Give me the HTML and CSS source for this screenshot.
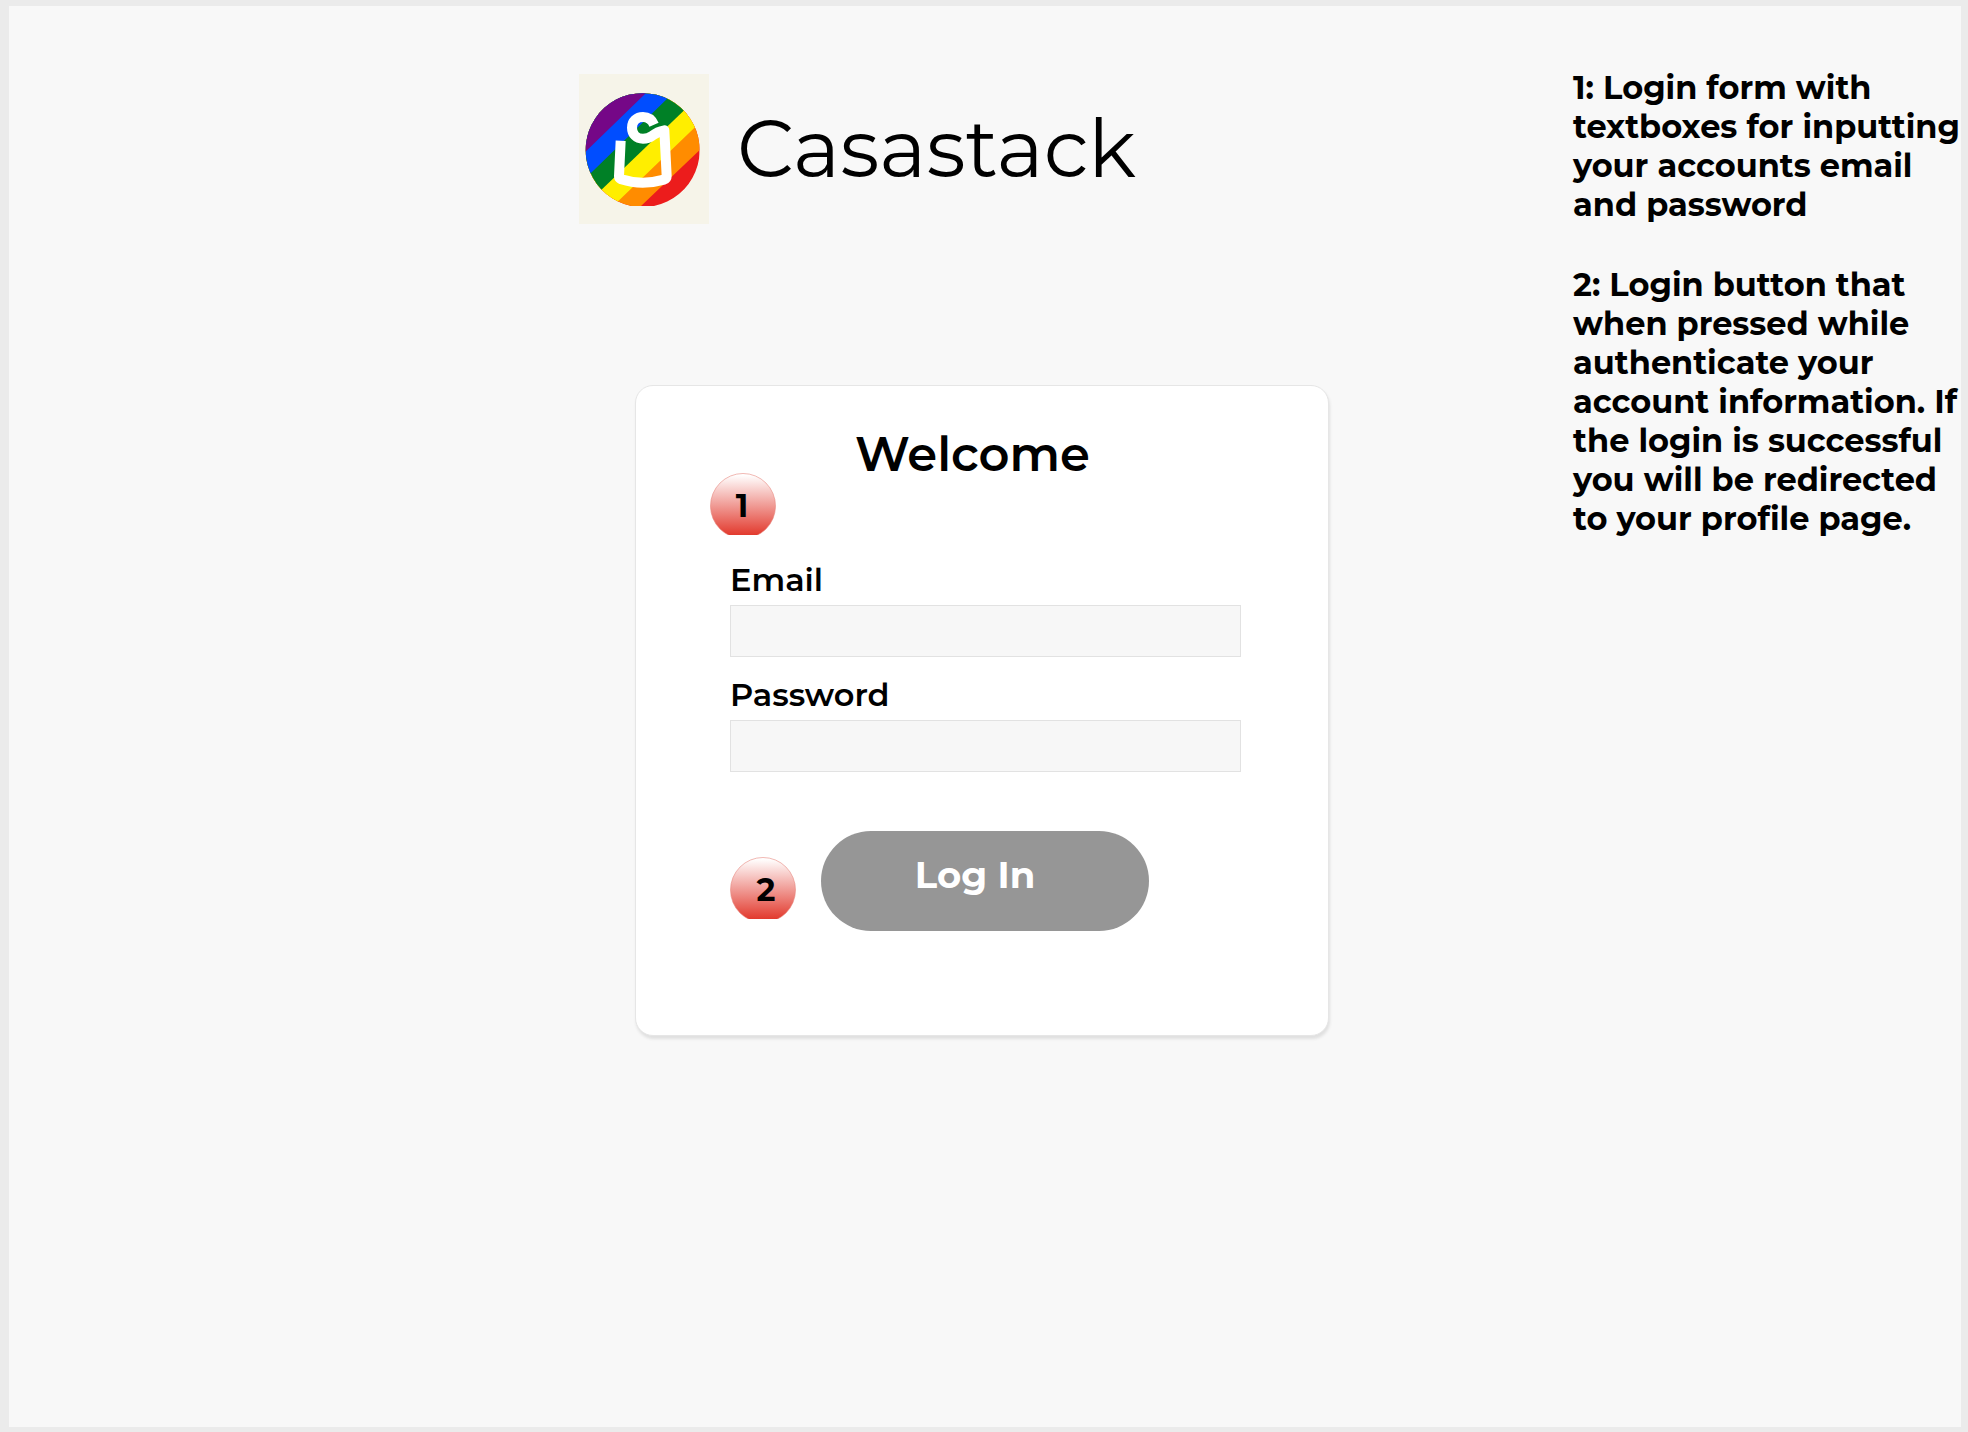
FILE: index.html
```html
<!DOCTYPE html>
<html lang="en">
<head>
<meta charset="utf-8">
<meta name="viewport" content="width=device-width, initial-scale=1">
<title>Casastack – Log In</title>
<link rel="stylesheet" href="styles.css">
</head>
<body>
<div class="frame">
  <main class="content">
    <header class="brand">
      <svg class="logo" viewBox="27 30 390 450" aria-hidden="true">
        <defs>
          <clipPath id="disc"><path d="M184 426A171 171 0 1 1 252 426Z"/></clipPath>
        </defs>
        <rect x="27" y="30" width="390" height="450" fill="#f6f4e9"/>
        <g clip-path="url(#disc)">
          <rect x="40" y="80" width="360" height="350" fill="#ec1c1c"/>
          <path d="M0 0H450V200L390 257 212 427 180 460H0Z" fill="#ff8c00"/>
          <path d="M0 0H450V118L375 190 145 411 94 460H0Z" fill="#ffee00"/>
          <path d="M0 0H450V35L341 140 96 376 0 468Z" fill="#008026"/>
          <path d="M0 0H399L293 103 62 328 0 388Z" fill="#004dff"/>
          <path d="M0 0H317L228 87 48 262 0 309Z" fill="#750787"/>
        </g>
        <path d="M152 230L147 337Q147 343 154 346Q215 366 282 347Q290 344 290 336L283 199Q262 203 247 215Q235 224 219 224C199 224 186 210 186 191C186 172 200 159 219 159C236 159 246 168 252 182" fill="none" stroke="#fff" stroke-width="30" stroke-linejoin="round"/>
      </svg>
      <h1 class="brand-name">Casastack</h1>
    </header>

    <form class="card">
      <h2 class="card-title">Welcome</h2>
      <svg class="badge badge-form" viewBox="0 0 66 62" role="img" aria-label="Note 1">
        <defs>
          <linearGradient id="red" gradientUnits="userSpaceOnUse" x1="0" y1="2" x2="0" y2="62">
            <stop offset="0" stop-color="#fff"/>
            <stop offset="1" stop-color="#e23a2e"/>
          </linearGradient>
        </defs>
        <circle class="badge-disc" cx="33" cy="33" r="32.5"/>
        <text class="badge-number" x="32" y="44">1</text>
      </svg>
      <label class="label" for="email">Email</label>
      <input class="field" id="email" type="email" name="email">
      <label class="label" for="password">Password</label>
      <input class="field" id="password" type="password" name="password">
      <div class="actions">
        <svg class="badge" viewBox="0 0 66 62" role="img" aria-label="Note 2">
          <circle class="badge-disc" cx="33" cy="33" r="32.5"/>
          <text class="badge-number" x="36" y="44">2</text>
        </svg>
        <button class="submit" type="submit">Log In</button>
      </div>
    </form>
  </main>

  <aside class="notes">
    <p>1: Login form with<br>textboxes for inputting<br>your accounts email<br>and password</p>
    <p>2: Login button that<br>when pressed while<br>authenticate your<br>account information. If<br>the login is successful<br>you will be redirected<br>to your profile page.</p>
  </aside>
</div>
</body>
</html>
```
FILE: styles.css
```css
* {
  box-sizing: border-box;
}

body {
  margin: 0;
  min-height: 100vh;
  display: flex;
  padding: 6px 7px 5px 9px;
  background: #ebebeb;
  color: #000;
  font-family: Montserrat, Inter, "Open Sans", sans-serif;
}

h1,
h2,
p {
  margin: 0;
}

.frame {
  flex: 1;
  display: grid;
  grid-template-columns: 1fr 694px 1fr;
  align-items: start;
  padding: 62px 6px 60px 0;
  background: #f8f8f8;
}

.content {
  grid-column: 2;
  padding-top: 6px;
}

.brand {
  display: flex;
  align-items: center;
  gap: 28px;
  margin-left: -56px;
}

.logo {
  width: 130px;
  height: 150px;
}

.brand-name {
  font-size: 80px;
  font-weight: 400;
  line-height: 96px;
}

.card {
  position: relative;
  display: flex;
  flex-direction: column;
  margin-top: 161px;
  padding: 39px 87px 104px 94px;
  border: 1px solid #e6e6e6;
  border-radius: 18px;
  background: #fff;
  box-shadow: 1px 3px 3px #e0e0e0;
}

.card-title {
  padding-right: 26px;
  font-size: 48px;
  font-weight: 600;
  line-height: 58px;
  text-align: center;
}

.badge {
  flex: none;
  width: 66px;
  height: 62px;
}

.badge-form {
  position: absolute;
  left: 74px;
  top: 87px;
}

.badge-disc {
  fill: url(#red);
  stroke: #e88880;
  stroke-width: 1px;
  stroke-opacity: 0.6;
}

.badge-number {
  font-size: 32px;
  font-weight: 700;
  text-anchor: middle;
}

.label {
  padding-bottom: 6px;
  font-size: 32px;
  font-weight: 600;
  line-height: 38px;
}

.card-title + .badge + .label {
  margin-top: 78px;
}

.field {
  width: 100%;
  height: 52px;
  padding: 0 12px;
  border: 1px solid #e2e2e2;
  border-radius: 0;
  background: #f7f7f7;
  font: inherit;
  font-size: 24px;
}

.field + .label {
  margin-top: 19px;
}

.actions {
  display: flex;
  align-items: center;
  gap: 25px;
  margin-top: 59px;
}

.actions .badge {
  margin-top: 14px;
}

.submit {
  width: 328px;
  height: 100px;
  padding: 0 20px 14px 0;
  border: 0;
  border-radius: 50px;
  background: #969696;
  color: #fff;
  font: inherit;
  font-size: 37px;
  font-weight: 700;
}

.notes {
  grid-column: 3;
  justify-self: end;
  width: 382px;
  display: flex;
  flex-direction: column;
  gap: 41px;
  font-size: 32px;
  font-weight: 700;
  line-height: 39px;
  white-space: nowrap;
}
```
